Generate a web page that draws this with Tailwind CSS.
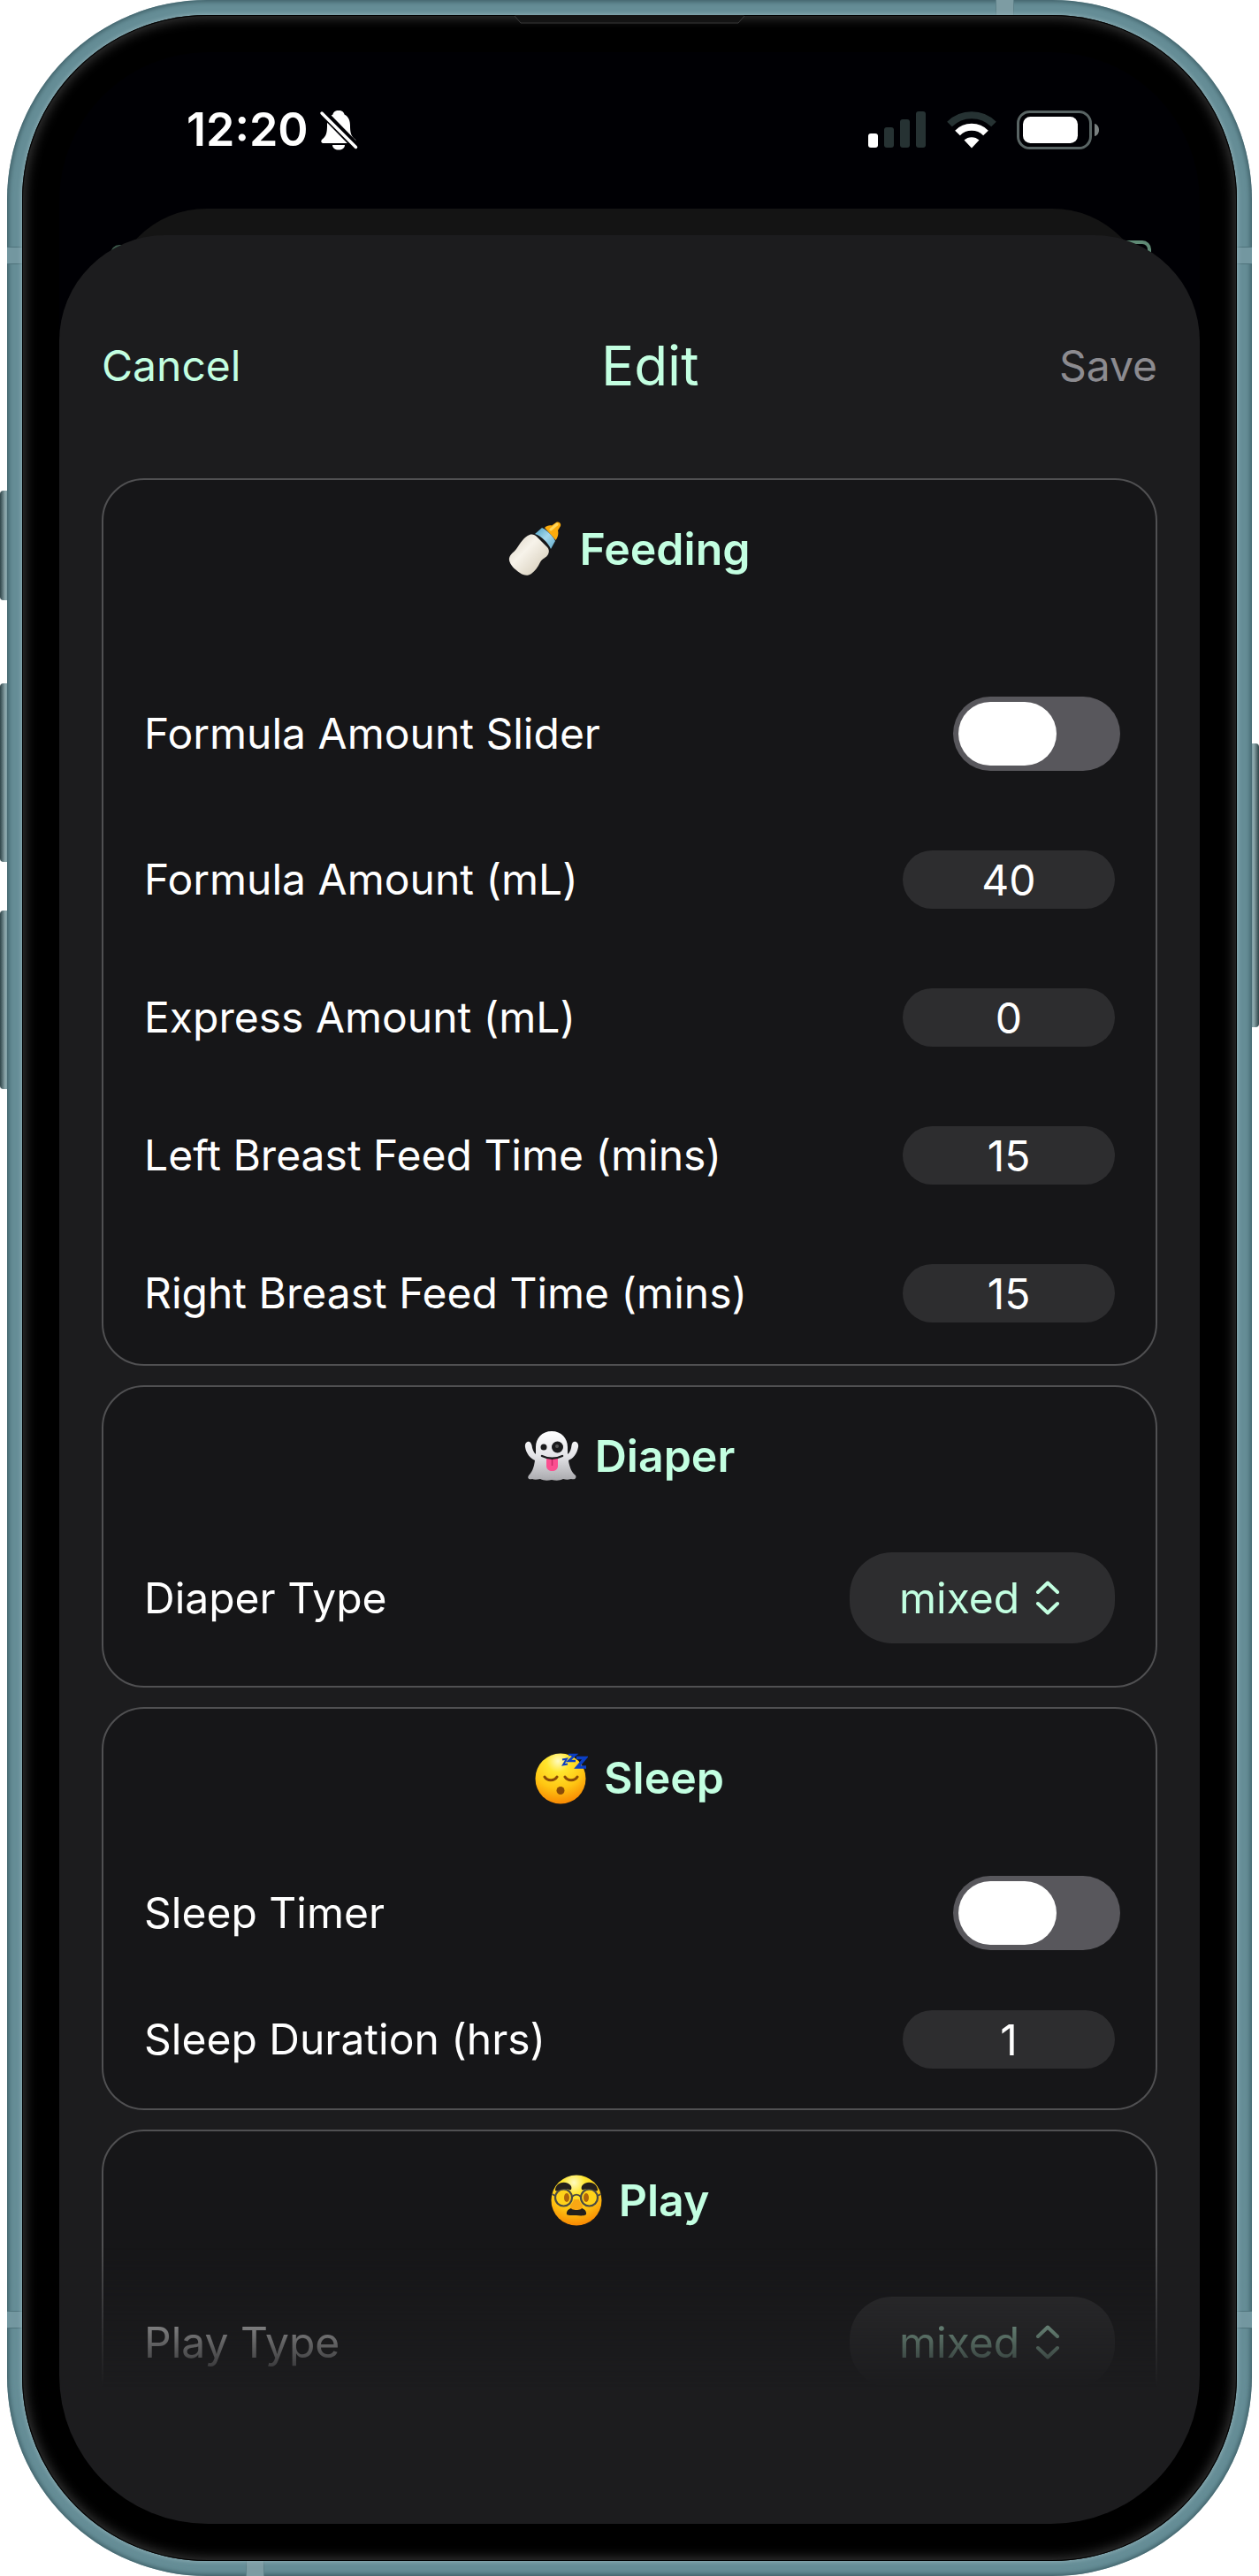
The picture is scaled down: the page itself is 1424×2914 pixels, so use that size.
<!DOCTYPE html>
<html lang="en">
<head>
    <meta charset="UTF-8">
    <meta name="viewport" content="width=device-width, initial-scale=1.0">
    <title>Edit defaults</title>
    <script src="https://cdn.jsdelivr.net/npm/@tailwindcss/browser@4"></script>
</head>
<body class="bg-white font-['Inter','Liberation_Sans',sans-serif]">
    <div class="relative h-screen px-2">
        <!-- Side buttons -->
        <div class="absolute left-0 top-[555px] h-[124px] w-3 rounded-l-sm bg-linear-to-r from-[#2f4549] via-[#8fa9ad] to-[#5b8891]"></div>
        <div class="absolute left-0 top-[773px] h-[202px] w-3 rounded-l-sm bg-linear-to-r from-[#2f4549] via-[#8fa9ad] to-[#5b8891]"></div>
        <div class="absolute left-0 top-[1030px] h-[202px] w-3 rounded-l-sm bg-linear-to-r from-[#2f4549] via-[#8fa9ad] to-[#5b8891]"></div>
        <div class="absolute right-0 top-[841px] h-[321px] w-3 rounded-r-sm bg-linear-to-l from-[#2f4549] via-[#8fa9ad] to-[#5b8891]"></div>

        <!-- Metal frame -->
        <div class="relative h-full overflow-hidden rounded-[226px] bg-[#658d96] p-[17px] shadow-[inset_0_0_5px_2px_#3f6068]">
            <div class="absolute left-0 top-[279px] h-5 w-[17px] border-y border-[#4f737b] bg-[#7397a0]"></div>
            <div class="absolute right-0 top-[279px] h-5 w-[17px] border-y border-[#4f737b] bg-[#7397a0]"></div>
            <div class="absolute bottom-[280px] left-0 h-5 w-[17px] border-y border-[#4f737b] bg-[#7397a0]"></div>
            <div class="absolute bottom-[280px] right-0 h-5 w-[17px] border-y border-[#4f737b] bg-[#7397a0]"></div>
            <div class="absolute right-[269px] top-0 h-[17px] w-[21px] border-x border-[#5d8088] bg-[#7d9ca3]"></div>
            <div class="absolute bottom-0 left-[270px] h-[17px] w-[21px] border-x border-[#5d8088] bg-[#7d9ca3]"></div>

            <!-- Bezel -->
            <div class="relative h-full overflow-hidden rounded-[209px] bg-black px-[42px] pb-[42px] pt-[42px] shadow-[0_0_5px_1px_#8fb0b7,inset_0_0_0_1px_#000,inset_0_0_14px_3px_#3a3a3a]">
                <svg class="absolute left-1/2 top-0 h-[10px] w-[260px] -translate-x-1/2" viewBox="0 0 260 10" aria-hidden="true">
                    <path d="M0 0h260l-7 8.500H7z" fill="#141414"/>
                    <path d="M0 1l7 8h246l7-8" fill="none" stroke="#3a3a3a" stroke-width="1"/>
                </svg>

                <!-- Screen -->
                <div class="flex h-full flex-col overflow-hidden rounded-[168px] bg-[#000004]">
                    <div class="flex h-44 shrink-0 items-center justify-between pl-[144px] pr-[113px] text-white">
                        <div class="flex items-center gap-3">
                            <time class="text-[52px] font-semibold leading-none">12:20</time>
                            <svg class="h-[46px] w-[44px]" viewBox="0 0 44 46" aria-label="Silent mode">
                                <path d="M22 1c-4 0-6 2-6.500 4.500C10.500 8 9 13 9 18c0 8-1 12-5.500 15.500C1.500 35.500 2 38 5 38h34c3 0 3.500-2.500 1.500-4.500C36 30 35 26 35 18c0-5-1.500-10-6.500-12.500C28 3 26 1 22 1z" fill="currentColor"/>
                                <path d="M15 40h14c0 3.500-3 5.500-7 5.500s-7-2-7-5.500z" fill="currentColor"/>
                                <path d="M1 0L44 44" stroke="#000004" stroke-width="9"/>
                                <path d="M3 4L41.500 42.500" stroke="currentColor" stroke-width="3.500" stroke-linecap="round"/>
                            </svg>
                        </div>
                        <div class="flex items-center">
                            <svg class="h-[42px] w-[66px]" viewBox="0 0 66 42" aria-label="Signal">
                                <rect x="0" y="25" width="11" height="16" rx="3" fill="#fff"/>
                                <rect x="18" y="18" width="11" height="23" rx="3" fill="#263233"/>
                                <rect x="36" y="9" width="11" height="32" rx="3" fill="#263233"/>
                                <rect x="54" y="0" width="11" height="41" rx="3" fill="#263233"/>
                            </svg>
                            <svg class="ml-[22px] h-[42px] w-[58px]" viewBox="0 0 58 42" aria-label="Wi-Fi">
                                <path d="M4 14.500a35.500 35.500 0 0 1 50 0" fill="none" stroke="#263233" stroke-width="8"/>
                                <path d="M13 24.500a22.500 22.500 0 0 1 32 0" fill="none" stroke="#fff" stroke-width="8"/>
                                <path d="M20.500 32.500a12.500 12.500 0 0 1 17 0L29 41.500z" fill="#fff"/>
                            </svg>
                            <svg class="ml-[22px] h-[44px] w-[94px]" viewBox="0 0 94 44" aria-label="Battery">
                                <rect x="1.500" y="1.500" width="82" height="41" rx="13" fill="none" stroke="#596464" stroke-width="3"/>
                                <rect x="7" y="7" width="62" height="30" rx="8.500" fill="#fff"/>
                                <path d="M88 15c3 .5 5 3.500 5 7s-2 6.500-5 7z" fill="#7a8080"/>
                            </svg>
                        </div>
                    </div>

                    <div class="relative flex min-h-0 flex-1 flex-col pt-[31px]">
                        <!-- Views underneath the sheet -->
                        <div class="absolute left-[58px] top-[42px] h-20 w-20 rounded-[10px] border-4 border-[#3c5a4c]"></div>
                        <div class="absolute right-[55px] top-[37px] h-20 w-20 rounded-[10px] border-4 border-[#5f8a75]"></div>
                        <div class="absolute inset-x-[57px] top-px h-40 rounded-t-[110px] bg-[#141414]"></div>

                        <!-- Sheet -->
                        <div class="relative flex min-h-0 flex-1 flex-col rounded-t-[120px] bg-[#1c1c1e] px-12 pb-[155px] pt-[108px]">
                            <header class="mb-[87px] flex h-20 shrink-0 items-center justify-between text-[#c3ffe1]">
                                <button type="button" class="text-5xl">Cancel</button>
                                <h1 class="text-[62px] leading-none">Edit</h1>
                                <button type="button" disabled class="text-5xl text-[#8c8b90]">Save</button>
                            </header>

                            <form class="flex min-h-0 flex-1 flex-col gap-[22px] overflow-y-auto text-5xl leading-none text-white [mask-image:linear-gradient(to_bottom,black_calc(100%-160px),transparent)] [scrollbar-width:none]">
                                <!-- Feeding -->
                                <section class="shrink-0 rounded-[48px] border-2 border-[#505052] bg-[#161618] px-[46px] pb-0.5 pt-12">
                                    <h2 class="mb-[92px] flex h-[60px] items-center justify-center gap-[18px] text-[50px] font-semibold text-[#c3ffe1]">
                                        <svg class="size-[62px]" viewBox="0 0 62 62" aria-hidden="true">
                                            <defs>
                                                <linearGradient id="milk" x1="0" y1="0" x2="1" y2="1">
                                                    <stop offset="0" stop-color="#d8d0c0"/>
                                                    <stop offset=".4" stop-color="#f7f3ea"/>
                                                    <stop offset="1" stop-color="#cfc5b0"/>
                                                </linearGradient>
                                                <linearGradient id="ring" x1="0" y1="0" x2="1" y2="1">
                                                    <stop offset="0" stop-color="#4ba0c4"/>
                                                    <stop offset=".5" stop-color="#a5d8ec"/>
                                                    <stop offset="1" stop-color="#5fa9c8"/>
                                                </linearGradient>
                                            </defs>
                                            <path d="M41 7c2-2 5-3 8-2.500L54 1c3-1.500 6 1 5 4l-3 5c1 4 0 8-2.500 11z" fill="#fbab0c"/>
                                            <path d="M48 9l7-6" stroke="#ffd65a" stroke-width="3" stroke-linecap="round"/>
                                            <path d="M24 15c3-1 6 0 8 2l12 12c2 2 2.500 5 1 8-2 4-6 4-9 9-3 6-6 10-10 13-4 3-9 2-13-1C7 54 2 49 1 44c-1-6 5-9 8-13 4-6 9-14 15-16z" fill="url(#milk)"/>
                                            <path d="M30 14l8-7c5 2 13 10 15 15l-5 9c-3-7-11-15-18-17z" fill="url(#ring)"/>
                                        </svg>
                                        Feeding
                                    </h2>
                                    <div class="flex h-[174px] items-center justify-between">
                                        <label for="formula-slider">Formula Amount Slider</label>
                                        <input id="formula-slider" type="checkbox" role="switch" class="relative -mr-[6px] h-[84px] w-[189px] appearance-none rounded-full bg-[#58575c] before:absolute before:left-[6px] before:top-[6px] before:h-[72px] before:w-[111px] before:rounded-full before:bg-white">
                                    </div>
                                    <div class="flex h-[156px] items-center justify-between">
                                        <label for="formula-amount">Formula Amount (mL)</label>
                                        <input id="formula-amount" type="text" inputmode="numeric" value="40" class="h-[66px] w-60 rounded-full bg-[#2d2d2f] text-center">
                                    </div>
                                    <div class="flex h-[156px] items-center justify-between">
                                        <label for="express-amount">Express Amount (mL)</label>
                                        <input id="express-amount" type="text" inputmode="numeric" value="0" class="h-[66px] w-60 rounded-full bg-[#2d2d2f] text-center">
                                    </div>
                                    <div class="flex h-[156px] items-center justify-between">
                                        <label for="left-time">Left Breast Feed Time (mins)</label>
                                        <input id="left-time" type="text" inputmode="numeric" value="15" class="h-[66px] w-60 rounded-full bg-[#2d2d2f] text-center">
                                    </div>
                                    <div class="flex h-[156px] items-center justify-between">
                                        <label for="right-time">Right Breast Feed Time (mins)</label>
                                        <input id="right-time" type="text" inputmode="numeric" value="15" class="h-[66px] w-60 rounded-full bg-[#2d2d2f] text-center">
                                    </div>
                                </section>

                                <!-- Diaper -->
                                <section class="shrink-0 rounded-[48px] border-2 border-[#505052] bg-[#161618] px-[46px] py-12">
                                    <h2 class="mb-[79px] flex h-[60px] items-center justify-center gap-[18px] text-[50px] font-semibold text-[#c3ffe1]">
                                        <svg class="size-[62px]" viewBox="0 0 62 62" aria-hidden="true">
                                            <defs>
                                                <linearGradient id="ghost" x1="0" y1="0" x2="0" y2="1">
                                                    <stop offset="0" stop-color="#fff"/>
                                                    <stop offset=".5" stop-color="#e4e4e8"/>
                                                    <stop offset="1" stop-color="#a9a9ad"/>
                                                </linearGradient>
                                            </defs>
                                            <path d="M31 3c11 0 18 8 18 18v8c3-2 4-6 4.500-10 .5-4 3-5 5-4s3 3 2.500 6c-1.500 8-6 13-11 15 1 8 4 14 8 17 1.500 3-1 5-5 4-4 1-6 1-9 0-4 2-8 2-13 1-5 1-9 1-13-1-4 1-7 1-9 0-4 1-6-1-4-4 4-4 6-9 7-17C7 34 2 28 1 21c-.5-3 .5-5 2.500-6s4 0 5 4c.5 4 2 8 4.500 10v-8C13 11 20 3 31 3z" fill="url(#ghost)"/>
                                            <circle cx="22" cy="21" r="3.500" fill="#1b1b1d"/>
                                            <circle cx="37.500" cy="21" r="6.500" fill="#1b1b1d"/>
                                            <circle cx="37" cy="20" r="2" fill="#555"/>
                                            <path d="M25 33h13v9c0 4-3 6-6.500 6S25 46 25 42z" fill="#fb4f90"/>
                                            <path d="M31.500 34v8" stroke="#c72a68" stroke-width="1.500"/>
                                            <path d="M20 31c7 3.500 16 3.500 23 0" fill="none" stroke="#1b1b1d" stroke-width="2.500" stroke-linecap="round"/>
                                        </svg>
                                        Diaper
                                    </h2>
                                    <div class="flex items-center justify-between">
                                        <label for="diaper-type">Diaper Type</label>
                                        <div class="relative text-[#c3ffe1]">
                                            <select id="diaper-type" class="h-[103px] w-[300px] appearance-none rounded-[48px] bg-[#2d2d2f] pl-14">
                                                <option>mixed</option>
                                                <option>wet</option>
                                                <option>dirty</option>
                                            </select>
                                            <svg class="pointer-events-none absolute right-[62px] top-8 h-[39px] w-7" viewBox="0 0 28 39" fill="none" stroke="currentColor" stroke-width="4" stroke-linecap="round" stroke-linejoin="round" aria-hidden="true">
                                                <path d="M3 13L14 2.500 25 13M3 26l11 10.500L25 26"/>
                                            </svg>
                                        </div>
                                    </div>
                                </section>

                                <!-- Sleep -->
                                <section class="shrink-0 rounded-[48px] border-2 border-[#505052] bg-[#161618] px-[46px] pt-12">
                                    <h2 class="mb-[58px] flex h-[60px] items-center justify-center gap-[18px] text-[50px] font-semibold text-[#c3ffe1]">
                                        <svg class="size-[60px]" viewBox="0 0 60 60" aria-hidden="true">
                                            <defs>
                                                <radialGradient id="face" cx=".45" cy=".15" r=".9">
                                                    <stop offset="0" stop-color="#fffbc0"/>
                                                    <stop offset=".25" stop-color="#ffe62e"/>
                                                    <stop offset=".6" stop-color="#ffc613"/>
                                                    <stop offset="1" stop-color="#f77f00"/>
                                                </radialGradient>
                                            </defs>
                                            <circle cx="29" cy="31" r="28.500" fill="url(#face)"/>
                                            <path d="M11 29c3 5 11 5 14 0M34 29c3 5 11 5 14 0" fill="none" stroke="#8a4b08" stroke-width="3" stroke-linecap="round"/>
                                            <ellipse cx="29" cy="44.500" rx="4.500" ry="4.500" fill="#8a4b08"/>
                                            <g fill="none" stroke="#0b3fc4" stroke-linejoin="miter">
                                                <path d="M31 9.500l5-.8-4 6.600 5-.8" stroke-width="2"/>
                                                <path d="M38 4h8l-8 7h8" stroke-width="2.500"/>
                                                <path d="M47 7.500h10L48 18h10" stroke-width="3.500"/>
                                            </g>
                                        </svg>
                                        Sleep
                                    </h2>
                                    <div class="flex h-[130px] items-center justify-between">
                                        <label for="sleep-timer">Sleep Timer</label>
                                        <input id="sleep-timer" type="checkbox" role="switch" class="relative -mr-[6px] h-[84px] w-[189px] appearance-none rounded-full bg-[#58575c] before:absolute before:left-[6px] before:top-[6px] before:h-[72px] before:w-[111px] before:rounded-full before:bg-white">
                                    </div>
                                    <div class="flex h-[156px] items-center justify-between">
                                        <label for="sleep-duration">Sleep Duration (hrs)</label>
                                        <input id="sleep-duration" type="text" inputmode="numeric" value="1" class="h-[66px] w-60 rounded-full bg-[#2d2d2f] text-center">
                                    </div>
                                </section>

                                <!-- Play -->
                                <section class="shrink-0 rounded-[48px] border-2 border-[#505052] bg-[#161618] px-[46px] py-12">
                                    <h2 class="mb-[79px] flex h-[60px] items-center justify-center gap-[18px] text-[50px] font-semibold text-[#c3ffe1]">
                                        <svg class="size-[60px]" viewBox="0 0 60 60" aria-hidden="true">
                                            <circle cx="30" cy="30" r="28.500" fill="url(#face)"/>
                                            <circle cx="15.500" cy="27" r="9.500" fill="#ffd21a" stroke="#4a4a44" stroke-width="2.200"/>
                                            <circle cx="44.500" cy="27" r="9.500" fill="#ffd21a" stroke="#4a4a44" stroke-width="2.200"/>
                                            <path d="M25 26c3-3 7-3 10 0M6 25l-3.500-2M54 25l3.500-2" fill="none" stroke="#4a4a44" stroke-width="2"/>
                                            <ellipse cx="19" cy="27" rx="3" ry="5" fill="#b0640a"/>
                                            <ellipse cx="41" cy="27" rx="3" ry="5" fill="#b0640a"/>
                                            <path d="M6 18c1-9 13-11 18-4 1 3 0 5-2 4-5-2-9-1-13 1-2 .8-3 .5-3-1zM54 18c-1-9-13-11-18-4-1 3 0 5 2 4 5-2 9-1 13 1 2 .8 3 .5 3-1z" fill="#241f1c"/>
                                            <path d="M19 46c-1-5 4-8 11-8s12 3 11 8c-3 2-7 1.500-11 1s-8 1-11-1z" fill="#241f1c"/>
                                            <path d="M27 29c-.5 4-4 5-4 8s4 4 7 4 7-1 7-4-3.500-4-4-8z" fill="#f9a714"/>
                                        </svg>
                                        Play
                                    </h2>
                                    <div class="flex items-center justify-between">
                                        <label for="play-type">Play Type</label>
                                        <div class="relative text-[#c3ffe1]">
                                            <select id="play-type" class="h-[103px] w-[300px] appearance-none rounded-[48px] bg-[#2d2d2f] pl-14">
                                                <option>mixed</option>
                                                <option>tummy time</option>
                                                <option>outdoor</option>
                                            </select>
                                            <svg class="pointer-events-none absolute right-[62px] top-8 h-[39px] w-7" viewBox="0 0 28 39" fill="none" stroke="currentColor" stroke-width="4" stroke-linecap="round" stroke-linejoin="round" aria-hidden="true">
                                                <path d="M3 13L14 2.500 25 13M3 26l11 10.500L25 26"/>
                                            </svg>
                                        </div>
                                    </div>
                                </section>
                            </form>
                        </div>
                    </div>
                </div>
            </div>
        </div>
    </div>
</body>
</html>
